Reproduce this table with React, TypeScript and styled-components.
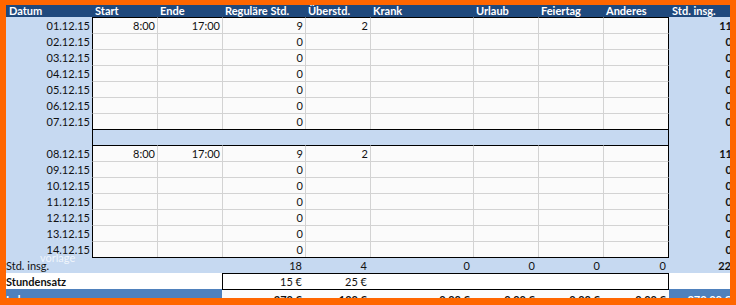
import React from "react";
import styled, { createGlobalStyle, css } from "styled-components";

const GlobalStyle = createGlobalStyle`
  html, body { margin: 0; padding: 0; background: #ff6600; }
  body { font-family: Lato, "Liberation Sans", Arial, sans-serif; }
`;

const WIDTHS = [86, 65, 65, 83, 65, 103, 65, 65, 66, 65];
const TEMPLATE = WIDTHS.map((w) => `${w}px`).join(" ");

const C = {
  orange: "#ff6600",
  navy: "#1f497d",
  light: "#c6d9f1",
  mid: "#4f81bd",
  cell: "#fbfbfb",
  grid: "#d3d3d3",
  ink: "#111111",
};

const Frame = styled.div`
  position: relative;
  width: 736px;
  height: 305px;
  box-sizing: border-box;
  padding: 5px 6px 7px 6px;
  background: ${C.orange};
`;

const Sheet = styled.div`
  width: 724px;
  height: 293px;
  overflow: hidden;
  background: ${C.light};
  font-family: Lato, "Liberation Sans", Arial, sans-serif;
  font-size: 11px;
  color: ${C.ink};
`;

const Row = styled.div<{ $h: number }>`
  display: grid;
  grid-template-columns: ${TEMPLATE};
  height: ${(p) => p.$h}px;
`;

const cellBase = css`
  box-sizing: border-box;
  white-space: nowrap;
  overflow: hidden;
  border-top: 1px solid transparent;
  line-height: 15px;
  padding: 0 3px;
  text-align: right;
`;

const HeadCell = styled.div`
  box-sizing: border-box;
  background: ${C.navy};
  color: #ffffff;
  font-weight: 700;
  line-height: 12px;
  padding-left: 3px;
  white-space: nowrap;
  overflow: hidden;
`;

const DateCell = styled.div<{ $bold?: boolean }>`
  ${cellBase};
  padding-right: 2px;
  background: ${C.light};
  font-weight: ${(p) => (p.$bold ? 700 : 400)};
`;

const GridCell = styled.div<{ $topBlack?: boolean; $first?: boolean; $last?: boolean }>`
  ${cellBase};
  padding-right: 2px;
  background: ${C.cell};
  border-top: 1px solid ${(p) => (p.$topBlack ? "#000" : C.grid)};
  border-left: 1px solid ${(p) => (p.$first ? "#000" : C.grid)};
  ${(p) => p.$last && "border-right: 1px solid #000;"}
`;

const SepCell = styled.div<{ $first?: boolean; $last?: boolean }>`
  ${cellBase};
  background: ${C.light};
  border-top: 1px solid #000;
  ${(p) => p.$first && "border-left: 1px solid #000;"}
  ${(p) => p.$last && "border-right: 1px solid #000;"}
`;

const TotalLabel = styled.div`
  ${cellBase};
  text-align: left;
  padding-left: 0;
  overflow: visible;
  background: ${C.light};
`;

const TotalCell = styled.div<{ $boxed?: boolean; $bold?: boolean }>`
  ${cellBase};
  background: ${C.light};
  ${(p) => p.$boxed && "border-top: 1px solid #000;"}
  font-weight: ${(p) => (p.$bold ? 700 : 400)};
`;

const RateLabel = styled.div`
  ${cellBase};
  grid-column: span 3;
  text-align: left;
  padding-left: 0;
  background: #ffffff;
  font-weight: 700;
`;

const RateCell = styled.div<{ $first?: boolean; $last?: boolean; $plain?: boolean }>`
  ${cellBase};
  background: #ffffff;
  ${(p) =>
    !p.$plain &&
    css`
      border-top: 1px solid #000;
    `}
  ${(p) => p.$first && "border-left: 1px solid #000;"}
  ${(p) => p.$last && "border-right: 1px solid #000;"}
`;

const WageLabel = styled.div`
  ${cellBase};
  grid-column: span 3;
  line-height: 19px;
  text-align: left;
  padding-left: 0;
  background: ${C.mid};
  color: #ffffff;
  font-weight: 700;
`;

const WageCell = styled.div<{ $accent?: boolean }>`
  ${cellBase};
  line-height: 19px;
  font-weight: 700;
  background: ${(p) => (p.$accent ? C.mid : C.cell)};
  color: ${(p) => (p.$accent ? "#ffffff" : C.ink)};
  border-top: 1px solid ${(p) => (p.$accent ? "transparent" : "#000")};
`;

const Watermark = styled.div`
  position: absolute;
  left: 40px;
  top: 252px;
  font-family: Lato, "Liberation Sans", Arial, sans-serif;
  font-size: 11px;
  line-height: 11px;
  color: rgba(255, 255, 255, 0.75);
  pointer-events: none;
`;

type Day = { date: string; start?: string; end?: string; reg: number; over?: number; total: number };

const week1: Day[] = [
  { date: "01.12.15", start: "8:00", end: "17:00", reg: 9, over: 2, total: 11 },
  { date: "02.12.15", reg: 0, total: 0 },
  { date: "03.12.15", reg: 0, total: 0 },
  { date: "04.12.15", reg: 0, total: 0 },
  { date: "05.12.15", reg: 0, total: 0 },
  { date: "06.12.15", reg: 0, total: 0 },
  { date: "07.12.15", reg: 0, total: 0 },
];

const week2: Day[] = [
  { date: "08.12.15", start: "8:00", end: "17:00", reg: 9, over: 2, total: 11 },
  { date: "09.12.15", reg: 0, total: 0 },
  { date: "10.12.15", reg: 0, total: 0 },
  { date: "11.12.15", reg: 0, total: 0 },
  { date: "12.12.15", reg: 0, total: 0 },
  { date: "13.12.15", reg: 0, total: 0 },
  { date: "14.12.15", reg: 0, total: 0 },
];

const headers = [
  "Datum",
  "Start",
  "Ende",
  "Reguläre Std.",
  "Überstd.",
  "Krank",
  "Urlaub",
  "Feiertag",
  "Anderes",
  "Std. insg.",
];

const DayRow: React.FC<{ d: Day; topBlack: boolean }> = ({ d, topBlack }) => (
  <Row $h={16}>
    <DateCell>{d.date}</DateCell>
    <GridCell $first $topBlack={topBlack}>{d.start ?? ""}</GridCell>
    <GridCell $topBlack={topBlack}>{d.end ?? ""}</GridCell>
    <GridCell $topBlack={topBlack}>{d.reg}</GridCell>
    <GridCell $topBlack={topBlack}>{d.over ?? ""}</GridCell>
    <GridCell $topBlack={topBlack} />
    <GridCell $topBlack={topBlack} />
    <GridCell $topBlack={topBlack} />
    <GridCell $last $topBlack={topBlack} />
    <DateCell $bold>{d.total}</DateCell>
  </Row>
);

export default function App() {
  return (
    <>
      <GlobalStyle />
      <Frame>
        <Sheet>
          <Row $h={12}>
            {headers.map((h) => (
              <HeadCell key={h}>{h}</HeadCell>
            ))}
          </Row>

          {week1.map((d, i) => (
            <DayRow key={d.date} d={d} topBlack={i === 0} />
          ))}

          <Row $h={16}>
            <DateCell />
            <SepCell $first />
            <SepCell />
            <SepCell />
            <SepCell />
            <SepCell />
            <SepCell />
            <SepCell />
            <SepCell $last />
            <DateCell />
          </Row>

          {week2.map((d, i) => (
            <DayRow key={d.date} d={d} topBlack={i === 0} />
          ))}

          <Row $h={16}>
            <TotalLabel>Std. insg.</TotalLabel>
            <TotalCell $boxed />
            <TotalCell $boxed />
            <TotalCell $boxed>18</TotalCell>
            <TotalCell $boxed>4</TotalCell>
            <TotalCell $boxed>0</TotalCell>
            <TotalCell $boxed>0</TotalCell>
            <TotalCell $boxed>0</TotalCell>
            <TotalCell $boxed>0</TotalCell>
            <TotalCell $bold>22</TotalCell>
          </Row>

          <Row $h={16}>
            <RateLabel>Stundensatz</RateLabel>
            <RateCell $first>15 €</RateCell>
            <RateCell>25 €</RateCell>
            <RateCell />
            <RateCell />
            <RateCell />
            <RateCell $last />
            <RateCell $plain />
          </Row>

          <Row $h={20}>
            <WageLabel>Lohn:</WageLabel>
            <WageCell>370 €</WageCell>
            <WageCell>100 €</WageCell>
            <WageCell>0,00 €</WageCell>
            <WageCell>0,00 €</WageCell>
            <WageCell>0,00 €</WageCell>
            <WageCell>0,00 €</WageCell>
            <WageCell $accent>370,00 €</WageCell>
          </Row>
        </Sheet>
        <Watermark>vorlage</Watermark>
      </Frame>
    </>
  );
}
